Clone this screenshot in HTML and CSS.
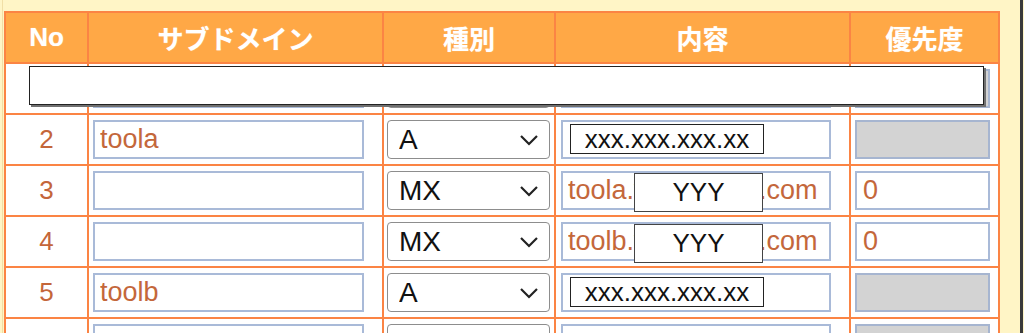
FILE: index.html
```html
<!DOCTYPE html>
<html lang="ja">
<head>
    <meta charset="UTF-8">
    <title>DNSレコード</title>
    <link rel="stylesheet" href="styles.css">
</head>
<body>
<div class="page">
    <div class="sheet">
        <table class="records">
            <colgroup>
                <col style="width:83px">
                <col style="width:295px">
                <col style="width:172px">
                <col style="width:295px">
                <col style="width:149px">
            </colgroup>
            <thead>
                <tr>
                    <th>No</th>
                    <th>サブドメイン</th>
                    <th>種別</th>
                    <th>内容</th>
                    <th>優先度</th>
                </tr>
            </thead>
            <tbody>
                <tr>
                    <td class="num">1</td>
                    <td class="c-sub"><input class="sub" type="text" value=""></td>
                    <td class="c-type"><span class="pick"><select class="type"><option>A</option><option>MX</option></select><svg class="chev" width="20" height="12" viewBox="0 0 20 12"><path d="M2 2 L10 10 L18 2" fill="none" stroke="#222" stroke-width="2.2"/></svg></span></td>
                    <td class="c-val"><span class="val-wrap"><input class="val" type="text" value=""></span></td>
                    <td class="c-pri"><input class="pri" type="text" value="" disabled></td>
                </tr>
                <tr>
                    <td class="num">2</td>
                    <td class="c-sub"><input class="sub" type="text" value="toola"></td>
                    <td class="c-type"><span class="pick"><select class="type"><option selected>A</option><option>MX</option></select><svg class="chev" width="20" height="12" viewBox="0 0 20 12"><path d="M2 2 L10 10 L18 2" fill="none" stroke="#222" stroke-width="2.2"/></svg></span></td>
                    <td class="c-val"><span class="val-wrap"><input class="val" type="text" value=""><span class="mask ip">xxx.xxx.xxx.xx</span></span></td>
                    <td class="c-pri"><input class="pri" type="text" value="" disabled></td>
                </tr>
                <tr>
                    <td class="num">3</td>
                    <td class="c-sub"><input class="sub" type="text" value=""></td>
                    <td class="c-type"><span class="pick"><select class="type"><option>A</option><option selected>MX</option></select><svg class="chev" width="20" height="12" viewBox="0 0 20 12"><path d="M2 2 L10 10 L18 2" fill="none" stroke="#222" stroke-width="2.2"/></svg></span></td>
                    <td class="c-val"><span class="val-wrap"><input class="val" type="text" value="toola.yyyy.yyyyy.com"><span class="mask host">YYY</span></span></td>
                    <td class="c-pri"><input class="pri" type="text" value="0"></td>
                </tr>
                <tr>
                    <td class="num">4</td>
                    <td class="c-sub"><input class="sub" type="text" value=""></td>
                    <td class="c-type"><span class="pick"><select class="type"><option>A</option><option selected>MX</option></select><svg class="chev" width="20" height="12" viewBox="0 0 20 12"><path d="M2 2 L10 10 L18 2" fill="none" stroke="#222" stroke-width="2.2"/></svg></span></td>
                    <td class="c-val"><span class="val-wrap"><input class="val" type="text" value="toolb.yyyy.yyyyy.com"><span class="mask host">YYY</span></span></td>
                    <td class="c-pri"><input class="pri" type="text" value="0"></td>
                </tr>
                <tr>
                    <td class="num">5</td>
                    <td class="c-sub"><input class="sub" type="text" value="toolb"></td>
                    <td class="c-type"><span class="pick"><select class="type"><option selected>A</option><option>MX</option></select><svg class="chev" width="20" height="12" viewBox="0 0 20 12"><path d="M2 2 L10 10 L18 2" fill="none" stroke="#222" stroke-width="2.2"/></svg></span></td>
                    <td class="c-val"><span class="val-wrap"><input class="val" type="text" value=""><span class="mask ip">xxx.xxx.xxx.xx</span></span></td>
                    <td class="c-pri"><input class="pri" type="text" value="" disabled></td>
                </tr>
                <tr>
                    <td class="num"></td>
                    <td class="c-sub"><input class="sub" type="text" value=""></td>
                    <td class="c-type"><span class="pick"><select class="type"><option selected>A</option><option>MX</option></select><svg class="chev" width="20" height="12" viewBox="0 0 20 12"><path d="M2 2 L10 10 L18 2" fill="none" stroke="#222" stroke-width="2.2"/></svg></span></td>
                    <td class="c-val"><span class="val-wrap"><input class="val" type="text" value=""></span></td>
                    <td class="c-pri"><input class="pri" type="text" value="" disabled></td>
                </tr>
            </tbody>
        </table>
        <div class="blank-box"></div>
    </div>
</div>
</body>
</html>
```

FILE: styles.css
```css
html, body {
    margin: 0;
    height: 100%;
    overflow: hidden;
}
body {
    background-color: #fff5c6;
    font-family: "Liberation Sans", "Noto Sans CJK JP", sans-serif;
}
.page {
    box-sizing: border-box;
    width: 1021px;
    height: 100%;
    margin-left: 2px;
    padding: 11px 0 0 1px;
    border-left: 1px solid #f1dfa6;
    border-right: 3px solid #3a3a3a;
}
.sheet {
    position: relative;
    display: inline-block;
}
.records {
    border-collapse: collapse;
    table-layout: fixed;
    width: 994px;
    background-color: white;
}
.records th,
.records td {
    border: 2px solid #fb8444;
    padding: 0;
    height: 49px;
}
.records th {
    background-color: #ffa846;
    color: white;
    font-size: 26px;
    font-weight: bold;
    text-align: center;
    text-shadow: 0 0 1px rgba(255, 255, 255, 0.6);
}
.records td.num {
    text-align: center;
    font-size: 26px;
    color: #c4663a;
}
.c-sub { padding-left: 4px !important; }
.c-type { padding-left: 3px !important; }
.c-val { padding-left: 5px !important; }
.c-pri { padding-left: 4px !important; }

input {
    box-sizing: border-box;
    height: 39px;
    border: 2px solid #a9bad8;
    padding: 0 5px;
    font-family: "Liberation Sans", sans-serif;
    font-size: 27px;
    color: #c4673b;
    background-color: white;
    vertical-align: middle;
    outline: none;
}
.sub { width: 271px; }
.val { width: 270px; }
.pri { width: 135px; padding-left: 6px; }
.pri:disabled {
    background-color: #d3d3d3;
    border-color: #a6b5d0;
}

.pick {
    position: relative;
    display: inline-block;
    vertical-align: middle;
}
.type {
    box-sizing: border-box;
    width: 163px;
    height: 39px;
    border: 1px solid #8d8d8d;
    border-radius: 4px;
    padding: 0 0 0 11px;
    appearance: none;
    -webkit-appearance: none;
    background-color: white;
    font-family: "Liberation Sans", sans-serif;
    font-size: 28px;
    color: #111;
    vertical-align: middle;
}
.chev {
    position: absolute;
    right: 11px;
    top: 14px;
    pointer-events: none;
}

.val-wrap {
    position: relative;
    display: inline-block;
    vertical-align: middle;
}
.val-wrap .val { display: block; }
.mask {
    position: absolute;
    box-sizing: border-box;
    border: 1px solid #222;
    background-color: white;
    color: #111;
    text-align: center;
}
.mask.ip {
    left: 9px;
    top: 4px;
    width: 194px;
    height: 30px;
    line-height: 28px;
    font-size: 26px;
}
.mask.host {
    left: 73px;
    top: 2px;
    width: 129px;
    height: 39px;
    line-height: 37px;
    font-size: 26px;
    border-color: #444;
}

.blank-box {
    position: absolute;
    left: 25px;
    top: 55px;
    width: 955px;
    height: 39px;
    box-sizing: border-box;
    border: 1px solid #222;
    background-color: white;
    box-shadow: 2px 2px 0 #707070;
}
```
